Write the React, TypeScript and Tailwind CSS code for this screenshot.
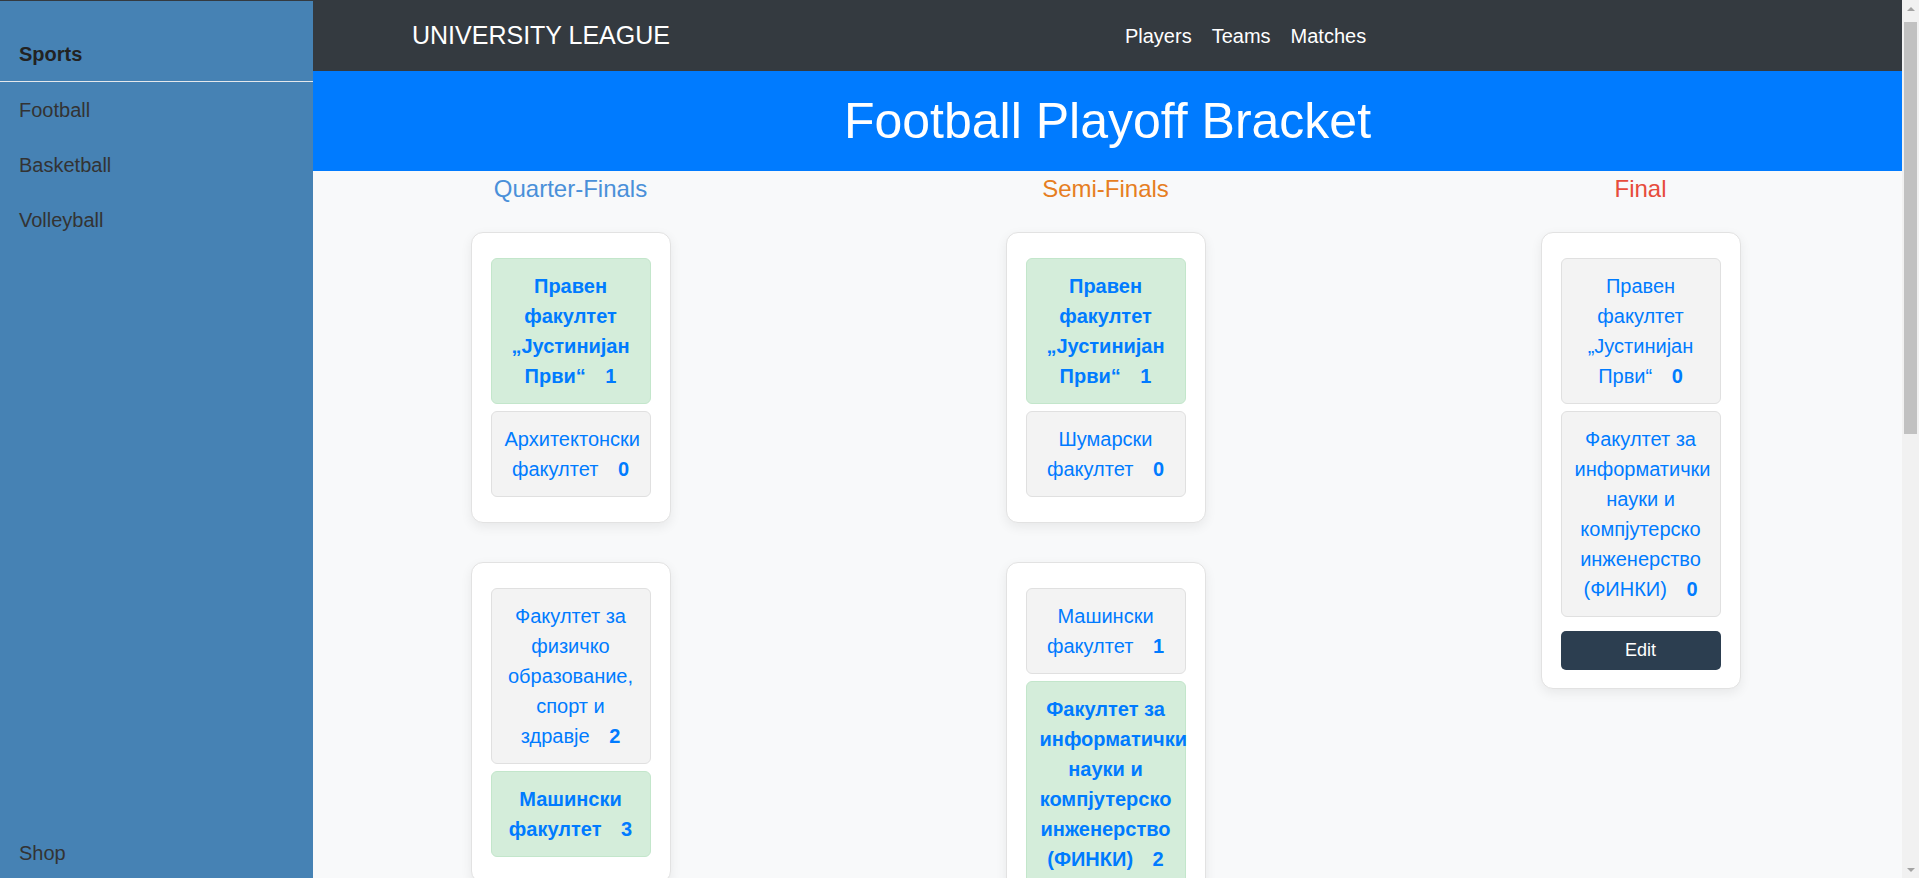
import React from "react";

type Team = { name: string; score: number; win?: boolean };
type Match = { a: Team; b: Team };

const quarter: Match[] = [
  { a: { name: "Правен факултет „Јустинијан Први“", score: 1, win: true }, b: { name: "Архитектонски факултет", score: 0 } },
  { a: { name: "Факултет за физичко образование, спорт и здравје", score: 2 }, b: { name: "Машински факултет", score: 3, win: true } },
  { a: { name: "Шумарски факултет", score: 2, win: true }, b: { name: "Економски факултет", score: 1 } },
  { a: { name: "Медицински факултет", score: 0 }, b: { name: "Факултет за информатички науки и компјутерско инженерство (ФИНКИ)", score: 4, win: true } },
];

const semi: Match[] = [
  { a: { name: "Правен факултет „Јустинијан Први“", score: 1, win: true }, b: { name: "Шумарски факултет", score: 0 } },
  { a: { name: "Машински факултет", score: 1 }, b: { name: "Факултет за информатички науки и компјутерско инженерство (ФИНКИ)", score: 2, win: true } },
];

const final: Match = {
  a: { name: "Правен факултет „Јустинијан Први“", score: 0 },
  b: { name: "Факултет за информатички науки и компјутерско инженерство (ФИНКИ)", score: 0 },
};

function TeamBox({ team }: { team: Team }) {
  return (
    <div
      className={
        team.win
          ? "my-[7px] rounded-[6px] border border-[#c3e6cb] bg-[#d4edda] px-[13px] py-3 text-center text-[20px] leading-[30px] font-bold text-[#007bff]"
          : "my-[7px] rounded-[6px] border border-[#e0e0e0] bg-[#f3f3f3] px-[13px] py-3 text-center text-[20px] leading-[30px] text-[#007bff]"
      }
    >
      {team.name} <span className="ml-[14px] font-bold">{team.score}</span>
    </div>
  );
}

function MatchCard({ match, edit }: { match: Match; edit?: boolean }) {
  return (
    <div className="w-[200px] rounded-[12px] border border-[#e2e2e2] bg-white px-[19px] py-[18px] shadow-[0_4px_12px_rgba(0,0,0,0.07)]">
      <TeamBox team={match.a} />
      <TeamBox team={match.b} />
      {edit && (
        <button className="mt-[14px] block h-[39px] w-full rounded-[5px] bg-[#2c3e50] text-[18px] text-white">
          Edit
        </button>
      )}
    </div>
  );
}

function Round({ title, color, children }: { title: string; color: string; children: React.ReactNode }) {
  return (
    <div className="flex flex-col items-center">
      <h2 className={"mt-[4px] text-[24px] leading-[28px] " + color}>{title}</h2>
      <div className="mt-[29px] flex flex-col items-center gap-[39px]">{children}</div>
    </div>
  );
}

function Scrollbar() {
  return (
    <div className="fixed right-0 top-0 flex h-screen w-[17px] flex-col items-center bg-[#f1f1f1]">
      <div className="flex h-[17px] w-full items-center justify-center">
        <div className="h-0 w-0 border-x-[4px] border-b-[4px] border-x-transparent border-b-[#a3a3a3]" />
      </div>
      <div className="mt-[5px] h-[412px] w-[13px] bg-[#c1c1c1]" />
      <div className="mt-auto flex h-[17px] w-full items-center justify-center">
        <div className="h-0 w-0 border-x-[4px] border-t-[4px] border-x-transparent border-t-[#a3a3a3]" />
      </div>
    </div>
  );
}

export default function App() {
  return (
    <div className="flex min-h-screen bg-[#f8f9fa] pr-[17px] font-['Liberation_Sans',Arial,sans-serif]">
      <aside className="sticky top-0 flex h-screen w-[313px] shrink-0 flex-col border-t border-[#343a40] bg-[#4682b4] text-[20px] text-[#333]">
        <div className="border-b border-[#e4e8ec] pl-[19px] pt-[40px] pb-[14px] leading-[26px] font-bold text-[#222]">Sports</div>
        <div className="flex h-[55px] items-center pl-[19px]">Football</div>
        <div className="flex h-[55px] items-center pl-[19px]">Basketball</div>
        <div className="flex h-[55px] items-center pl-[19px]">Volleyball</div>
        <div className="mt-auto flex h-[50px] items-center pl-[19px]">Shop</div>
      </aside>

      <main className="flex min-w-0 flex-1 flex-col pb-16">
        <nav className="flex h-[71px] items-center bg-[#343a40] text-white">
          <span className="ml-[99px] text-[25px]">UNIVERSITY LEAGUE</span>
          <div className="ml-[455px] flex gap-[20px] text-[20px]">
            <span>Players</span>
            <span>Teams</span>
            <span>Matches</span>
          </div>
        </nav>
        <header className="flex h-[100px] items-center justify-center bg-[#007bff] text-[50px] text-white">
          Football Playoff Bracket
        </header>

        <div className="-ml-[10px] grid grid-cols-[535px_535px_535px]">
          <Round title="Quarter-Finals" color="text-[#4a90d9]">
            {quarter.map((m, i) => (
              <MatchCard key={i} match={m} />
            ))}
          </Round>
          <Round title="Semi-Finals" color="text-[#e67e22]">
            {semi.map((m, i) => (
              <MatchCard key={i} match={m} />
            ))}
          </Round>
          <Round title="Final" color="text-[#e74c3c]">
            <MatchCard match={final} edit />
          </Round>
        </div>
      </main>
      <Scrollbar />
    </div>
  );
}
